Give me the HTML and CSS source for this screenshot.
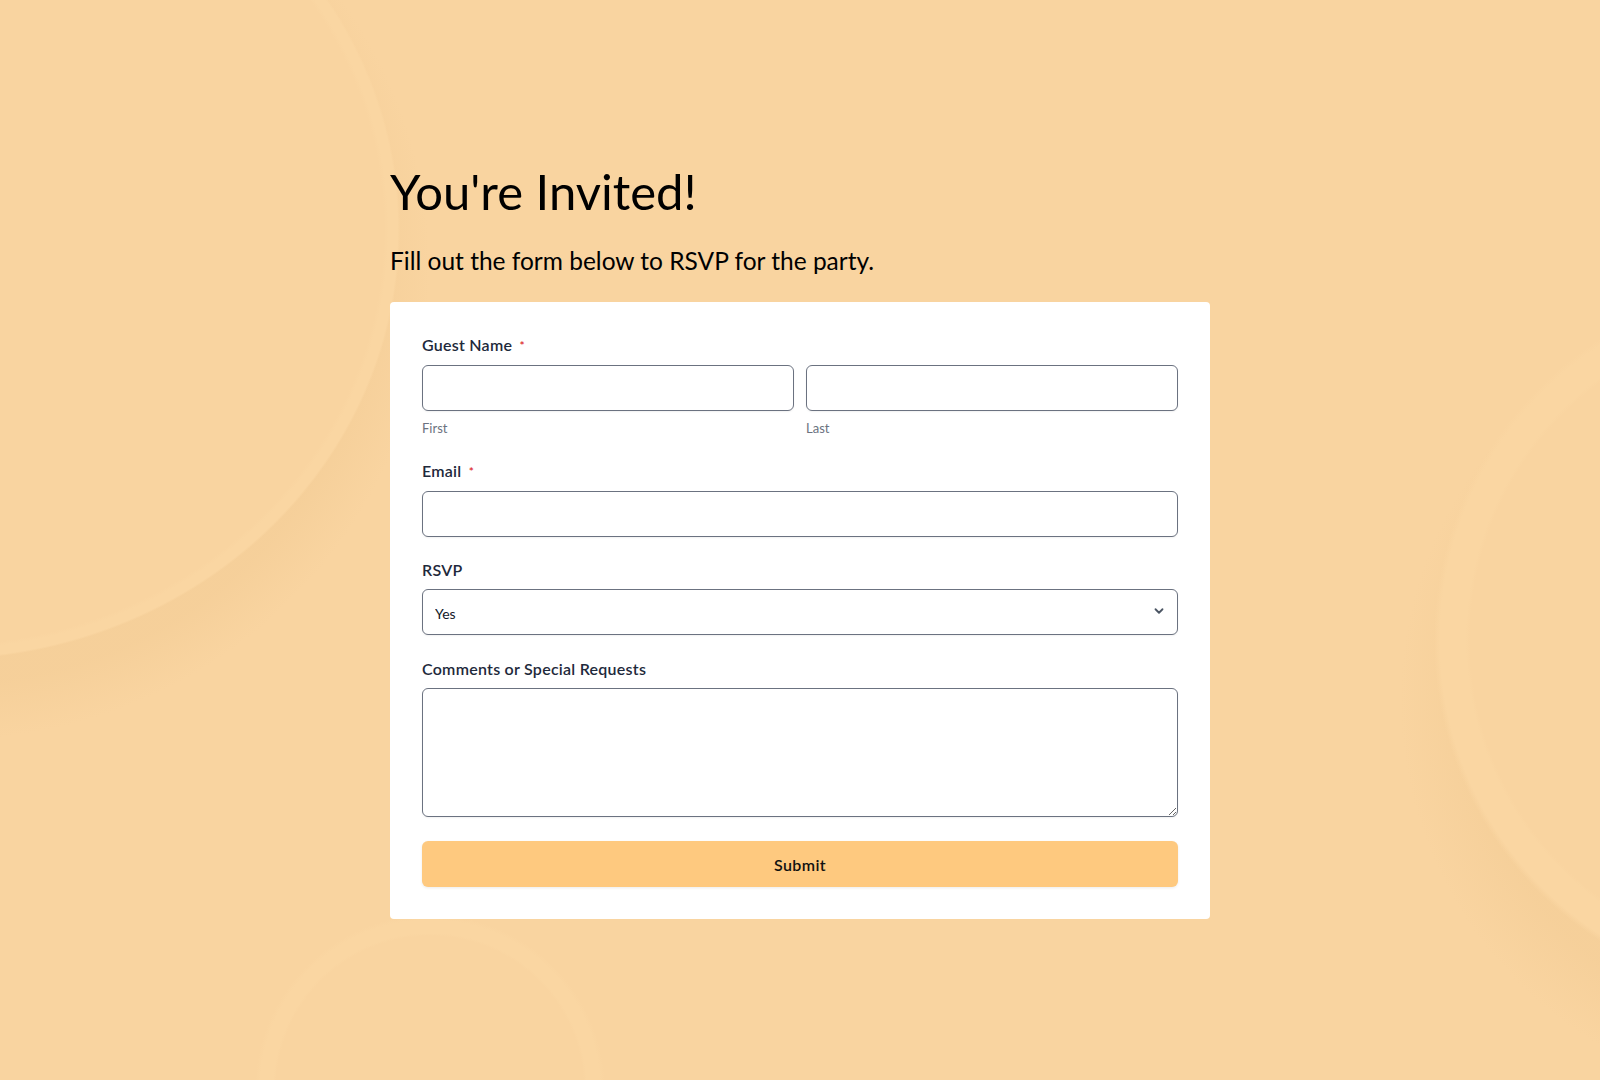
FILE: index.html
```html
<!DOCTYPE html>
<html lang="en">
<head>
<meta charset="utf-8">
<title>You're Invited!</title>
<link rel="stylesheet" href="styles.css">
</head>
<body>
<main class="page">
  <h1 class="title">You're Invited!</h1>
  <p class="subtitle">Fill out the form below to RSVP for the party.</p>
  <form class="card">
    <div class="field">
      <div class="label">Guest Name <span class="req">*</span></div>
      <div class="name-row">
        <div class="name-col">
          <input class="input" type="text">
          <div class="sublabel">First</div>
        </div>
        <div class="name-col">
          <input class="input" type="text">
          <div class="sublabel">Last</div>
        </div>
      </div>
    </div>
    <div class="field">
      <div class="label">Email <span class="req">*</span></div>
      <input class="input" type="email">
    </div>
    <div class="field">
      <div class="label">RSVP</div>
      <div class="select-wrap">
        <select class="input select">
          <option>Yes</option>
          <option>No</option>
          <option>Maybe</option>
        </select>
        <svg class="chevron" width="14" height="14" viewBox="0 0 20 20" fill="none"><path d="M5 7.5l5 5 5-5" stroke="#4b5563" stroke-width="2.6" stroke-linecap="round" stroke-linejoin="round"/></svg>
      </div>
    </div>
    <div class="field">
      <div class="label">Comments or Special Requests</div>
      <textarea class="input textarea"></textarea>
    </div>
    <button class="submit" type="button">Submit</button>
  </form>
</main>
</body>
</html>
```
FILE: styles.css
```css
* { box-sizing: border-box; }

html, body {
  margin: 0;
  min-height: 100%;
}

body {
  min-height: 1080px;
  font-family: Lato, "Noto Sans", sans-serif;
  color: #000;
  background-color: #f9d4a0;
  background-image:
    radial-gradient(ellipse 460px 430px at -60px 230px, #f9d4a0 0, #f9d4a0 96.5%, #fad6a2 97.5%, #fad6a2 99.5%, rgba(249,212,160,0) 100%),
    radial-gradient(ellipse 480px 470px at -50px 270px, rgba(232,190,130,0.2) 88%, rgba(232,190,130,0) 100%),
    radial-gradient(circle at 1790px 640px, #f9d4a0 0, #f9d4a0 320px, #fad6a2 324px, #fad6a2 350px, rgba(249,212,160,0) 356px),
    radial-gradient(circle at 1800px 700px, rgba(232,190,130,0.2) 330px, rgba(232,190,130,0) 400px),
    radial-gradient(circle at 430px 1090px, #f9d4a0 0, #f9d4a0 154px, #fad6a2 157px, #fad6a2 170px, rgba(249,212,160,0) 175px);
  background-repeat: no-repeat;
}

.page {
  width: 820px;
  margin: 0 auto;
  padding-top: 162px;
  display: flex;
  flex-direction: column;
}

.title {
  margin: 0;
  font-size: 49px;
  line-height: 58px;
  font-weight: 400;
  color: #000;
}

.subtitle {
  margin: 23px 0 23px;
  font-size: 24.5px;
  line-height: 36px;
  font-weight: 400;
  color: #000;
}

.card {
  background: #fff;
  border-radius: 4px;
  padding: 32px;
  display: flex;
  flex-direction: column;
  gap: 22.5px;
}

.field {
  display: flex;
  flex-direction: column;
}

.label {
  font-size: 16px;
  line-height: 22px;
  font-weight: 600;
  letter-spacing: 0.25px;
  color: #1e293b;
  margin-bottom: 8px;
}

.req {
  color: #dc2626;
  font-size: 12px;
  margin-left: 3px;
  vertical-align: 1px;
}

.name-row {
  display: grid;
  grid-template-columns: 1fr 1fr;
  gap: 12px;
}

.name-col {
  display: flex;
  flex-direction: column;
}

.input {
  display: block;
  width: 100%;
  height: 46px;
  margin: 0;
  border: 1px solid #6b7280;
  border-radius: 6px;
  background: #fff;
  box-shadow: 0 1px 2px rgba(0, 0, 0, 0.06);
  font-family: Lato, "Noto Sans", sans-serif;
  font-size: 14px;
  color: #111827;
  padding: 0 12px;
  outline: none;
}

.sublabel {
  margin-top: 8px;
  font-size: 13px;
  line-height: 18px;
  color: #6b7280;
}

.select-wrap {
  position: relative;
}

.select {
  appearance: none;
  -webkit-appearance: none;
  padding-top: 2px;
}

.chevron {
  position: absolute;
  right: 12px;
  top: 15px;
  pointer-events: none;
}

.textarea {
  height: 129px;
  padding: 10px 12px;
  resize: vertical;
}

.submit {
  margin-top: 2px;
  height: 46px;
  width: 100%;
  border: none;
  border-radius: 6px;
  background: #fec97f;
  box-shadow: 0 1px 3px rgba(0, 0, 0, 0.08);
  font-family: Lato, "Noto Sans", sans-serif;
  font-size: 16px;
  font-weight: 600;
  letter-spacing: 0.4px;
  color: #111;
  cursor: pointer;
}
```
